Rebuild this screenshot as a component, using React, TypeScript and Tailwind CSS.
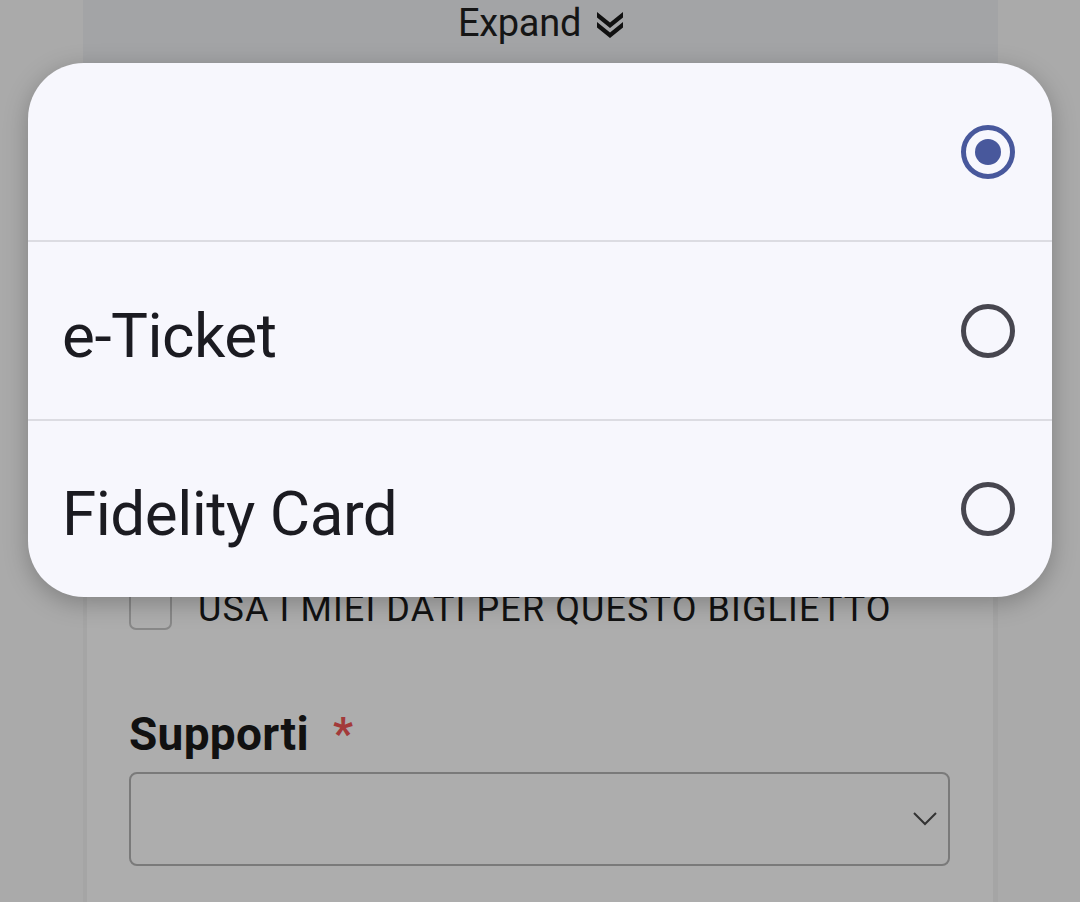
import React from "react";

function Radio({ selected }: { selected?: boolean }) {
  return (
    <svg width="56" height="56" viewBox="0 0 56 56">
      <circle cx="28" cy="28" r="24.5" fill="none" stroke={selected ? "#48589c" : "#47464f"} strokeWidth="5" />
      {selected && <circle cx="28" cy="28" r="13" fill="#48589c" />}
    </svg>
  );
}

export default function App() {
  const rows = ["", "e-Ticket", "Fidelity Card"];
  return (
    <div className="relative h-[902px] w-[1080px] overflow-hidden bg-[#aaaaaa]" style={{ fontFamily: "Roboto, 'Noto Sans', sans-serif" }}>
      <div className="ml-[83px] w-[915px] flex flex-col">
        <div className="h-[300px] bg-[#a3a4a6] flex justify-center pt-[1px] pl-[2px]">
          <div className="flex items-start gap-[14px]">
            <span className="text-[38px] leading-[44px] text-[#151515] tracking-[-0.3px]">Expand</span>
            <svg width="30" height="30" viewBox="0 0 30 30" className="mt-[9px]">
              <path d="M2 2 L15 12.5 L28 2 L28 7.5 L15 18 L2 7.5 Z" fill="#111" />
              <path d="M2 12 L15 22.5 L28 12 L28 17.5 L15 28 L2 17.5 Z" fill="#111" />
            </svg>
          </div>
        </div>
        <div className="h-[602px] bg-[#adadad] border-l-[4px] border-r-[5px] border-[#a5a5a5] px-[42px] pt-[287px] flex flex-col">
          <div className="flex items-center gap-[26px]">
            <div className="w-[43px] h-[43px] rounded-[7px] border-[2px] border-[#888888]" />
            <span className="text-[36px] leading-[40px] text-[#121212] tracking-[1.1px] whitespace-nowrap">USA I MIEI DATI PER QUESTO BIGLIETTO</span>
          </div>
          <div className="mt-[78px] flex items-center gap-[24px]">
            <span className="text-[46px] leading-[52px] font-bold text-[#111] tracking-[0.3px]">Supporti</span>
            <span className="text-[44px] leading-[52px] font-bold text-[#a33a3a]">*</span>
          </div>
          <div className="mt-[12px] w-[821px] h-[94px] rounded-[8px] border-[2px] border-[#7a7a7a] flex items-center justify-end pr-[10px]">
            <svg width="26" height="16" viewBox="0 0 26 16">
              <path d="M2 2 L13 13 L24 2" fill="none" stroke="#333" strokeWidth="2" />
            </svg>
          </div>
        </div>
      </div>

      <div className="absolute left-[28px] top-[63px] w-[1024px] rounded-[56px] bg-[#f7f7fd] overflow-hidden shadow-[0_6px_24px_rgba(0,0,0,0.25)]">
        {rows.map((r, i) => (
          <div key={i} className={`flex items-center justify-between pl-[34px] pr-[36px] ${i < 2 ? "h-[179px] border-b-[2px] border-[#dcdce2]" : "h-[176px]"}`}>
            <span className="mt-[10px] text-[62px] leading-[72px] text-[#1b1b21] tracking-[-0.5px]">{r}</span>
            <Radio selected={i === 0} />
          </div>
        ))}
      </div>
    </div>
  );
}
